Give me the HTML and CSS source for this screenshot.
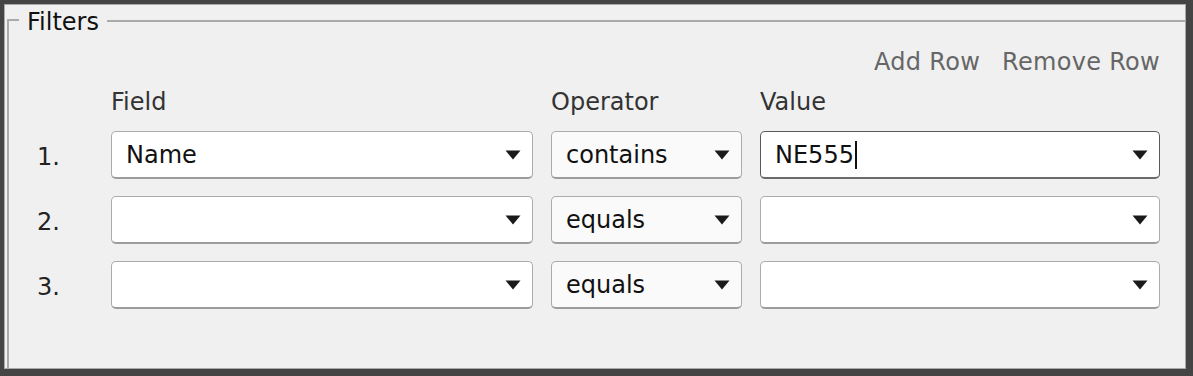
FILE: index.html
```html
<!DOCTYPE html>
<html>
<head>
<meta charset="utf-8">
<title>Filters</title>
<link rel="stylesheet" href="styles.css">
</head>
<body>
<div class="frame">
  <div class="group-head">
    <span class="corner"></span>
    <span class="legend">Filters</span>
    <span class="rule"></span>
  </div>
  <div class="group-body">
    <div class="actions">
      <span class="action">Add Row</span>
      <span class="action">Remove Row</span>
    </div>
    <div class="grid">
      <span></span>
      <span class="col-head">Field</span>
      <span class="col-head">Operator</span>
      <span class="col-head">Value</span>

      <span class="num">1.</span>
      <div class="combo"><span class="val">Name</span><svg class="arrow" viewBox="0 0 16 10"><path d="M0.5 0.5H15.5L8 9.5Z"/></svg></div>
      <div class="combo op"><span class="val">contains</span><svg class="arrow" viewBox="0 0 16 10"><path d="M0.5 0.5H15.5L8 9.5Z"/></svg></div>
      <div class="combo focus"><span class="val">NE555<span class="caret"></span></span><svg class="arrow" viewBox="0 0 16 10"><path d="M0.5 0.5H15.5L8 9.5Z"/></svg></div>

      <span class="num">2.</span>
      <div class="combo"><span class="val"></span><svg class="arrow" viewBox="0 0 16 10"><path d="M0.5 0.5H15.5L8 9.5Z"/></svg></div>
      <div class="combo op"><span class="val">equals</span><svg class="arrow" viewBox="0 0 16 10"><path d="M0.5 0.5H15.5L8 9.5Z"/></svg></div>
      <div class="combo"><span class="val"></span><svg class="arrow" viewBox="0 0 16 10"><path d="M0.5 0.5H15.5L8 9.5Z"/></svg></div>

      <span class="num">3.</span>
      <div class="combo"><span class="val"></span><svg class="arrow" viewBox="0 0 16 10"><path d="M0.5 0.5H15.5L8 9.5Z"/></svg></div>
      <div class="combo op"><span class="val">equals</span><svg class="arrow" viewBox="0 0 16 10"><path d="M0.5 0.5H15.5L8 9.5Z"/></svg></div>
      <div class="combo"><span class="val"></span><svg class="arrow" viewBox="0 0 16 10"><path d="M0.5 0.5H15.5L8 9.5Z"/></svg></div>
    </div>
  </div>
</div>
</body>
</html>
```
FILE: styles.css
```css
html, body {
  margin: 0;
  padding: 0;
  background: #444;
}
body {
  width: 1193px;
  height: 376px;
  padding: 4px 7px 7px 4px;
  box-sizing: border-box;
  font-family: "DejaVu Sans", sans-serif;
}
.frame {
  height: 100%;
  box-sizing: border-box;
  border: 1px solid #a9a9a9;
  background: #f0f0f0;
  display: flex;
  flex-direction: column;
}
.group-head {
  display: flex;
  align-items: center;
  height: 30px;
  margin-left: 2px;
}
.corner {
  align-self: flex-end;
  width: 10px;
  height: 14px;
  border-top: 2px solid #aaa;
  border-left: 2px solid #aaa;
}
.legend {
  font-size: 24px;
  line-height: 30px;
  color: #111;
  padding: 4px 8px 0 8px;
}
.rule {
  flex: 1;
  border-top: 2px solid #aaa;
  margin-top: 2px;
}
.group-body {
  flex: 1;
  margin-left: 2px;
  border-left: 2px solid #aaa;
  padding-left: 28px;
}
.actions {
  display: flex;
  justify-content: flex-end;
  gap: 22px;
  padding-right: 25px;
  margin-top: 13px;
}
.action {
  font-size: 24px;
  line-height: 28px;
  color: #666;
  letter-spacing: 0.3px;
}
.grid {
  display: grid;
  grid-template-columns: 56px 422px 191px 400px;
  grid-template-rows: 28px 48px 48px 48px;
  column-gap: 18px;
  row-gap: 17px;
  margin-top: 10px;
}
.col-head {
  font-size: 24px;
  line-height: 28px;
  color: #333;
  padding-top: 2px;
}
.num {
  align-self: center;
  font-size: 24px;
  line-height: 28px;
  color: #222;
  padding-top: 3px;
}
.combo {
  display: flex;
  align-items: center;
  justify-content: space-between;
  box-sizing: border-box;
  height: 48px;
  padding: 0 11px 0 14px;
  background: #fff;
  border: 1px solid #ababab;
  border-bottom: 2px solid #9c9c9c;
  border-radius: 5px;
}
.combo.op {
  background: #fafafa;
}
.combo.focus {
  border-color: #5a5a5a;
  border-bottom-color: #6a6a6a;
}
.val {
  font-size: 24px;
  line-height: 28px;
  color: #111;
  display: flex;
  align-items: center;
}
.caret {
  display: inline-block;
  width: 2px;
  height: 28px;
  background: #111;
  margin-left: 1px;
}
.arrow {
  width: 16px;
  height: 10px;
  fill: #1a1a1a;
  flex: none;
}
```
